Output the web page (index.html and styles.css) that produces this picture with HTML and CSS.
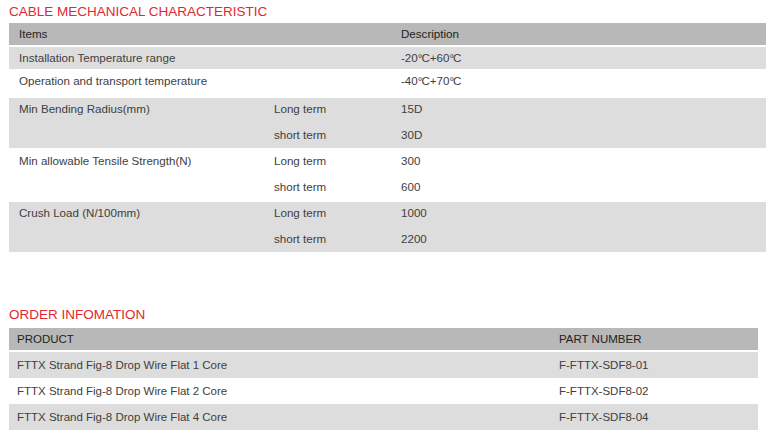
FILE: index.html
```html
<!DOCTYPE html>
<html>
<head>
<meta charset="utf-8">
<link rel="stylesheet" href="styles.css">
</head>
<body>
<div class="page">
  <h2 class="title">CABLE MECHANICAL CHARACTERISTIC</h2>
  <div class="spec">
    <div class="row head"><div class="c1">Items</div><div class="c2"></div><div class="c3">Description</div></div>
    <div class="row grey r1"><div class="c1">Installation Temperature range</div><div class="c2"></div><div class="c3"><span>-20<span class="deg">°</span>C+60<span class="deg">°</span>C</span></div></div>
    <div class="row r2"><div class="c1">Operation and transport temperature</div><div class="c2"></div><div class="c3"><span>-40<span class="deg">°</span>C+70<span class="deg">°</span>C</span></div></div>
    <div class="row grey double"><div class="c1">Min Bending Radius(mm)</div><div class="c2"><span>Long term</span><span>short term</span></div><div class="c3"><span>15D</span><span>30D</span></div></div>
    <div class="row double"><div class="c1">Min allowable Tensile Strength(N)</div><div class="c2"><span>Long term</span><span>short term</span></div><div class="c3"><span>300</span><span>600</span></div></div>
    <div class="row grey double"><div class="c1">Crush Load (N/100mm)</div><div class="c2"><span>Long term</span><span>short term</span></div><div class="c3"><span>1000</span><span>2200</span></div></div>
  </div>

  <h2 class="title order-title">ORDER INFOMATION</h2>
  <div class="order">
    <div class="orow ohead"><div class="o1">PRODUCT</div><div class="o2">PART NUMBER</div></div>
    <div class="orow grey"><div class="o1">FTTX Strand Fig-8 Drop Wire Flat 1 Core</div><div class="o2">F-FTTX-SDF8-01</div></div>
    <div class="orow"><div class="o1">FTTX Strand Fig-8 Drop Wire Flat 2 Core</div><div class="o2">F-FTTX-SDF8-02</div></div>
    <div class="orow grey"><div class="o1">FTTX Strand Fig-8 Drop Wire Flat 4 Core</div><div class="o2">F-FTTX-SDF8-04</div></div>
  </div>
</div>
</body>
</html>
```

FILE: styles.css
```css
html, body {
  margin: 0;
  padding: 0;
  background: #ffffff;
}
body {
  font-family: "Liberation Sans", Arial, sans-serif;
  color: #404040;
}
.page {
  padding: 2px 0 0 9px;
  width: 757px;
}
.title {
  margin: 0;
  font-weight: normal;
  font-size: 13.5px;
  line-height: 19px;
  color: #e2282f;
  height: 21px;
}
.spec {
  display: flex;
  flex-direction: column;
  gap: 2px;
  font-size: 11.6px;
}
.row {
  display: grid;
  grid-template-columns: 255px 127px 1fr;
  height: 22px;
  line-height: 22px;
}
.row > div {
  padding-left: 10px;
  display: flex;
  flex-direction: column;
  gap: 4px;
}
.deg {
  letter-spacing: -1px;
}
.head {
  background: #b8b8b8;
  color: #222222;
}
.grey {
  background: #dddddd;
}
.r2 {
  height: 25px;
  line-height: 20px;
}
.double {
  height: 50px;
  line-height: 20px;
}
.double > div {
  padding-top: 1px;
  gap: 6px;
}
.order-title {
  margin-top: 53px;
  height: 23px;
}
.order {
  width: 749px;
  font-size: 11.5px;
}
.orow {
  display: grid;
  grid-template-columns: 542px 1fr;
  height: 26px;
  line-height: 26px;
}
.orow > div {
  padding-left: 8px;
}
.ohead {
  background: #b8b8b8;
  color: #222222;
  height: 22px;
  line-height: 22px;
  margin-bottom: 2px;
}
```
